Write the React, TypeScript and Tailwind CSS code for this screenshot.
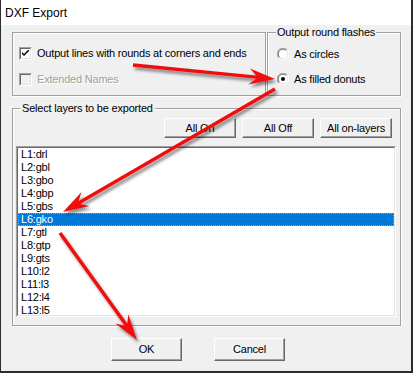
import React from "react";

const rows = [
  "L1:drl",
  "L2:gbl",
  "L3:gbo",
  "L4:gbp",
  "L5:gbs",
  "L6:gko",
  "L7:gtl",
  "L8:gtp",
  "L9:gts",
  "L10:l2",
  "L11:l3",
  "L12:l4",
  "L13:l5",
];

function Checkbox({ checked, disabled }: { checked?: boolean; disabled?: boolean }) {
  return (
    <div className="w-[13px] h-[13px] flex border border-t-[#a0a0a0] border-l-[#a0a0a0] border-r-white border-b-white">
      <div
        className={
          "flex-1 flex items-center justify-center border border-t-[#696969] border-l-[#696969] border-r-[#e3e3e3] border-b-[#e3e3e3] " +
          (disabled ? "bg-[#f0f0f0]" : "bg-white")
        }
      >
        {checked && (
          <svg width="7" height="7" viewBox="0 0 7 7">
            <path d="M0 2 L0 4 L2 6 L7 1 L7 -1 L2 4 Z" fill="#000" />
          </svg>
        )}
      </div>
    </div>
  );
}

function Radio({ checked }: { checked?: boolean }) {
  return (
    <svg width="12" height="12" viewBox="0 0 12 12">
      <circle cx="6" cy="6" r="5.5" fill="#fff" />
      <path d="M1.8 10.2 A5.5 5.5 0 0 1 10.2 1.8" stroke="#a0a0a0" fill="none" />
      <path d="M10.2 1.8 A5.5 5.5 0 0 1 1.8 10.2" stroke="#fff" fill="none" />
      <path d="M2.6 9.4 A4.5 4.5 0 0 1 9.4 2.6" stroke="#696969" fill="none" />
      <path d="M9.4 2.6 A4.5 4.5 0 0 1 2.6 9.4" stroke="#e3e3e3" fill="none" />
      {checked && <circle cx="6" cy="6" r="2" fill="#000" />}
    </svg>
  );
}

function Button({ label, className }: { label: string; className: string }) {
  return (
    <div
      className={
        "flex items-center justify-center bg-[#f0f0f0] border border-t-white border-l-white border-r-[#696969] border-b-[#696969] shadow-[inset_-1px_-1px_0_#a0a0a0] " +
        className
      }
    >
      {label}
    </div>
  );
}

function arrowPath(x1: number, y1: number, x2: number, y2: number) {
  const len = Math.hypot(x2 - x1, y2 - y1);
  const ux = (x2 - x1) / len;
  const uy = (y2 - y1) / len;
  const px = -uy;
  const py = ux;
  const head = 26;
  const half = 8;
  const notch = 19;
  const bx = x2 - ux * head;
  const by = y2 - uy * head;
  const nx = x2 - ux * notch;
  const ny = y2 - uy * notch;
  const w = 1.7;
  const pts = [
    [x1 + px * w, y1 + py * w],
    [nx + px * w, ny + py * w],
    [bx + px * half, by + py * half],
    [x2, y2],
    [bx - px * half, by - py * half],
    [nx - px * w, ny - py * w],
    [x1 - px * w, y1 - py * w],
  ];
  return "M" + pts.map((p) => p[0].toFixed(1) + " " + p[1].toFixed(1)).join(" L") + " Z";
}

export default function App() {
  return (
    <div className="relative w-[413px] h-[373px] overflow-hidden flex flex-col bg-[#f0f0f0] border-l border-r-2 border-b-2 border-[#2d2d2d] text-[11px] tracking-[-0.2px] text-black font-['Liberation_Sans',Arial,sans-serif]">
      <div className="h-[25px] shrink-0 bg-white flex items-center pl-[4px] text-[12px] tracking-normal">
        DXF Export
      </div>

      <div className="flex flex-col pt-[7px] pl-[11px]">
        <div className="flex gap-[1px]">
          <div className="w-[254px] h-[64px] border border-[#a0a0a0] shadow-[inset_1px_1px_0_#fff,1px_1px_0_#fff] flex flex-col pt-[14px] pl-[6px] gap-[13px]">
            <div className="flex items-center gap-[5px] h-[13px]">
              <Checkbox checked />
              <span>Output lines with rounds at corners and ends</span>
            </div>
            <div className="flex items-center gap-[5px] h-[13px]">
              <Checkbox disabled />
              <span className="text-[#a0a0a0] [text-shadow:1px_1px_0_#fff]">Extended Names</span>
            </div>
          </div>

          <div className="relative w-[134px] h-[64px] border border-[#a0a0a0] shadow-[inset_1px_1px_0_#fff,1px_1px_0_#fff] flex flex-col pt-[15px] pl-[9px] gap-[13px]">
            <span className="absolute -top-[8px] left-[8px] px-[1px] bg-[#f0f0f0] leading-[14px]">
              Output round flashes
            </span>
            <div className="flex items-center gap-[5px] h-[12px]">
              <Radio />
              <span>As circles</span>
            </div>
            <div className="flex items-center gap-[5px] h-[12px]">
              <Radio checked />
              <span>As filled donuts</span>
            </div>
          </div>
        </div>

        <div className="relative mt-[12px] w-[389px] h-[218px] border border-[#a0a0a0] shadow-[inset_1px_1px_0_#fff,1px_1px_0_#fff] flex flex-col">
          <span className="absolute -top-[8px] left-[7px] px-[2px] bg-[#f0f0f0] leading-[14px]">
            Select layers to be exported
          </span>
          <div className="flex justify-end gap-[6px] mt-[9px] pr-[8px]">
            <Button label="All On" className="w-[72px] h-[20px]" />
            <Button label="All Off" className="w-[72px] h-[20px]" />
            <Button label="All on-layers" className="w-[72px] h-[20px]" />
          </div>
          <div className="mt-[8px] ml-[3px] w-[380px] h-[171px] flex border border-t-[#a0a0a0] border-l-[#a0a0a0] border-r-white border-b-white">
            <div className="flex-1 overflow-hidden bg-white border border-t-[#696969] border-l-[#696969] border-r-[#e3e3e3] border-b-[#e3e3e3]">
              {rows.map((r) => (
                <div
                  key={r}
                  className={
                    "h-[13px] leading-[13px] pl-[3px] " +
                    (r === "L6:gko"
                      ? "bg-[#0078d7] text-white outline outline-1 -outline-offset-1 outline-dotted outline-[#ff8a2a]"
                      : "")
                  }
                >
                  {r}
                </div>
              ))}
            </div>
          </div>
        </div>

        <div className="flex gap-[32px] mt-[12px] pl-[99px]">
          <Button label="OK" className="w-[71px] h-[23px]" />
          <Button label="Cancel" className="w-[71px] h-[23px]" />
        </div>
      </div>

      <svg
        className="absolute left-[-1px] top-0 pointer-events-none"
        width="413"
        height="373"
        viewBox="0 0 413 373"
      >
        <defs>
          <filter id="sh" x="-20%" y="-20%" width="140%" height="140%">
            <feDropShadow dx="2" dy="3" stdDeviation="1.6" floodColor="#000" floodOpacity="0.45" />
          </filter>
        </defs>
        <g fill="#f01010" filter="url(#sh)">
          <path d={arrowPath(133, 65, 275, 79)} />
          <path d={arrowPath(275, 89, 63, 212)} />
          <path d={arrowPath(60, 233, 137, 340)} />
        </g>
      </svg>
    </div>
  );
}
